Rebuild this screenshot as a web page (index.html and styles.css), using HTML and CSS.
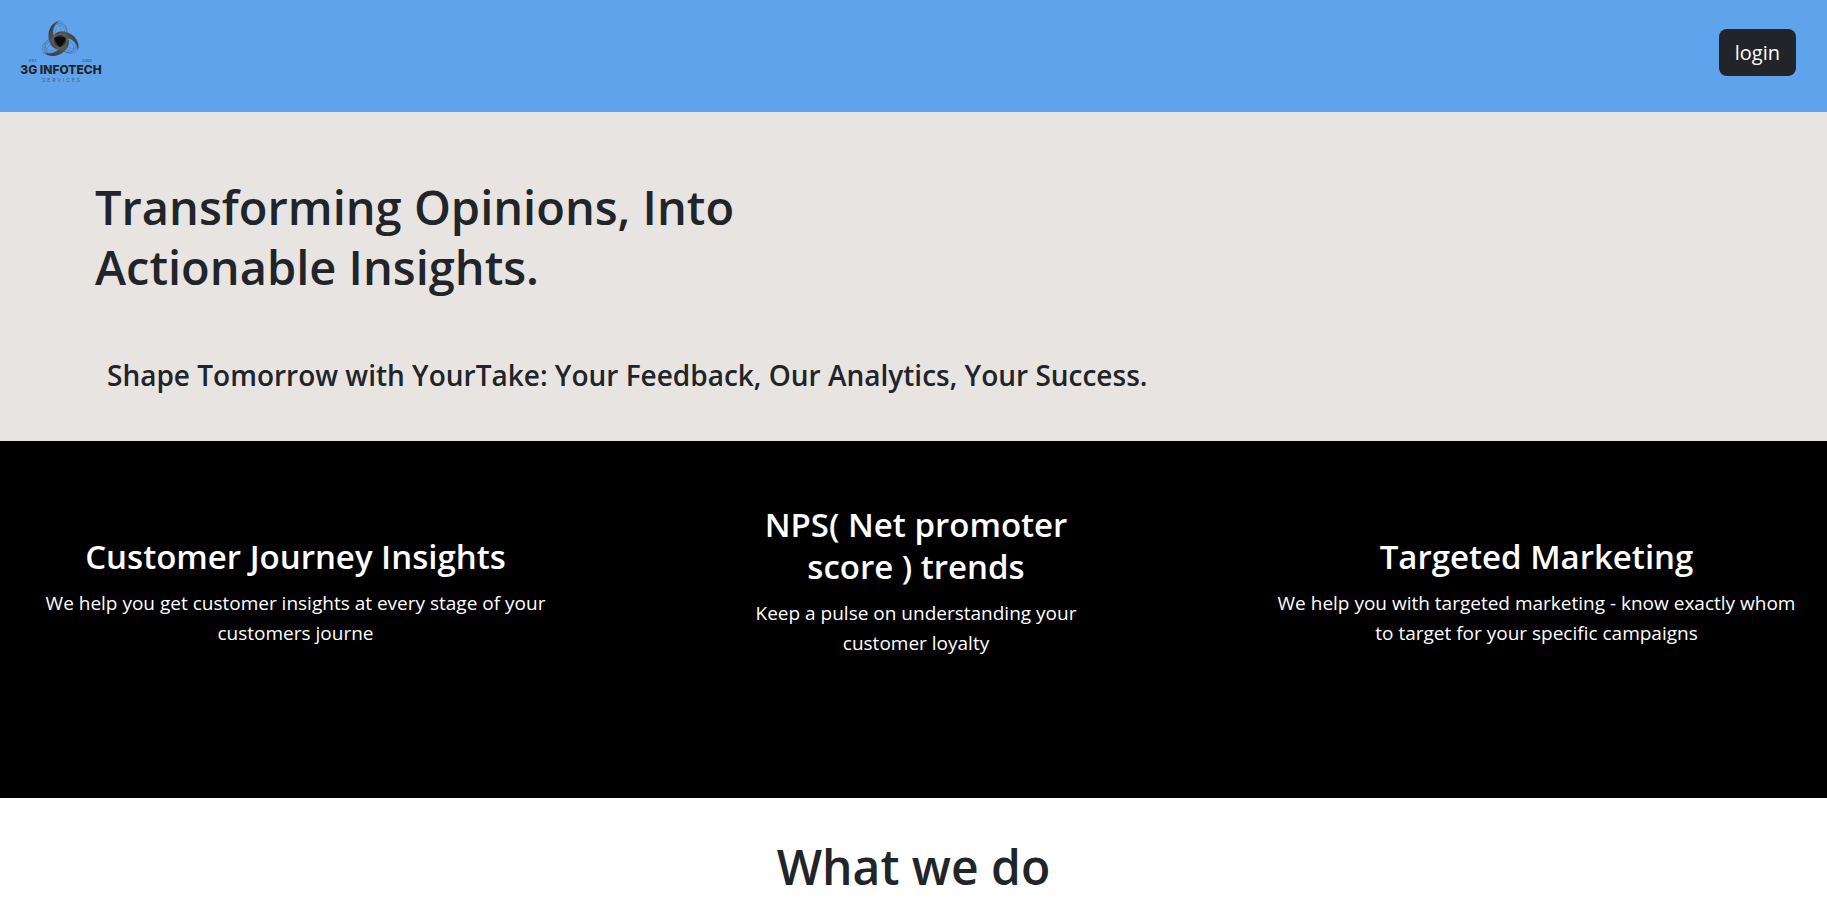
FILE: index.html
```html
<!DOCTYPE html>
<html lang="en">
<head>
  <meta charset="utf-8">
  <meta name="viewport" content="width=device-width, initial-scale=1">
  <title>3G Infotech Services</title>
  <link rel="stylesheet" href="styles.css">
</head>
<body>
  <header class="topbar">
    <a class="brand" href="#" aria-label="3G Infotech Services">
      <svg class="brand-logo" viewBox="0 0 90 72" role="img" aria-label="3G Infotech Services logo">
        <defs>
          <linearGradient id="blade" x1="0" y1="0" x2="1" y2="1">
            <stop offset="0" stop-color="#2c2c2c"/>
            <stop offset="0.45" stop-color="#565656"/>
            <stop offset="1" stop-color="#161616"/>
          </linearGradient>
          <g id="petal">
            <g class="mesh">
              <ellipse cx="43" cy="16" rx="8" ry="11"/>
              <ellipse cx="44" cy="17" rx="7" ry="10"/>
              <ellipse cx="45" cy="18" rx="6" ry="9"/>
              <ellipse cx="42" cy="18" rx="7" ry="11"/>
              <ellipse cx="41" cy="19" rx="5" ry="11"/>
            </g>
            <path fill="url(#blade)" d="M43 5 C35 7 31 15 33 24 C34 29 37 32 41 33 L48 20 C42 22 37 22 37 16 C37 11 39 8 43 5Z"/>
          </g>
        </defs>
        <use href="#petal"/>
        <use href="#petal" transform="rotate(120 44 25)"/>
        <use href="#petal" transform="rotate(240 44 25)"/>
        <circle cx="44" cy="25" r="7" fill="#333" stroke="#5a5a5a" stroke-width="2"/>
        <path fill="#0b0b0b" d="M38 22 Q44 19 50 22 Q48 28 44 31 Q40 28 38 22Z"/>
        <text class="logo-tiny" x="13" y="46">EST.</text>
        <text class="logo-tiny" x="66" y="46">2002</text>
        <text class="logo-name" x="45" y="58" text-anchor="middle">3G INFOTECH</text>
        <text class="logo-sub" x="46" y="66" text-anchor="middle">SERVICES</text>
      </svg>
    </a>
    <button class="login" type="button">login</button>
  </header>
  <main>
    <section class="hero">
      <h1 class="hero-title">Transforming Opinions, Into Actionable Insights.</h1>
      <p class="hero-lead">Shape Tomorrow with YourTake: Your Feedback, Our Analytics, Your Success.</p>
    </section>
    <section class="features">
      <article class="feature">
        <h2 class="feature-title">Customer Journey Insights</h2>
        <p class="feature-text">We help you get customer insights at every stage of your customers journe</p>
      </article>
      <article class="feature feature-middle">
        <h2 class="feature-title">NPS( Net promoter score ) trends</h2>
        <p class="feature-text">Keep a pulse on understanding your customer loyalty</p>
      </article>
      <article class="feature">
        <h2 class="feature-title">Targeted Marketing</h2>
        <p class="feature-text">We help you with targeted marketing - know exactly whom to target for your specific campaigns</p>
      </article>
    </section>
    <section class="about">
      <h2 class="about-title">What we do</h2>
    </section>
  </main>
</body>
</html>
```
FILE: styles.css
```css
* {
  box-sizing: border-box;
}

body {
  margin: 0;
  background: #fff;
  color: #212529;
  font-family: "Open Sans", "Noto Sans", sans-serif;
  font-size: 19px;
  line-height: 30px;
}

h1, h2, p {
  margin: 0;
}

.topbar {
  display: flex;
  justify-content: space-between;
  align-items: flex-start;
  padding: 16px 31px 24px 16px;
  background: #5fa3ec;
}

.brand {
  display: block;
}

.brand-logo {
  display: block;
  width: 90px;
  height: 72px;
}

.mesh {
  fill: none;
  stroke: #2b4a6c;
  stroke-width: 0.4;
  opacity: 0.6;
}

.logo-name {
  fill: #222527;
  font: 800 12px Inter, sans-serif;
}

.logo-sub {
  fill: #3f5f82;
  font: 400 5px Inter, sans-serif;
  letter-spacing: 2px;
}

.logo-tiny {
  fill: #2f4a68;
  font: 400 4px Inter, sans-serif;
}

.login {
  margin-top: 13px;
  padding: 8px 16px;
  border: 0;
  border-radius: 8px;
  background: #212529;
  color: #fff;
  font: inherit;
  font-size: 20px;
  line-height: 31px;
}

.hero {
  padding: 65px 96px 48px 95px;
  background: #e8e4e1;
}

.hero-title {
  max-width: 700px;
  font-size: 47px;
  font-weight: 600;
  line-height: 60px;
}

.hero-lead {
  margin-top: 60px;
  padding-left: 12px;
  font-size: 28px;
  font-weight: 600;
  line-height: 36px;
}

.features {
  display: grid;
  grid-template-columns: 1fr 330px 1fr;
  column-gap: 194px;
  padding: 63px 29px 140px 34px;
  background: #000;
  color: #fff;
  text-align: center;
}

.feature {
  padding-top: 32px;
}

.feature-middle {
  padding-top: 0;
}

.feature-title {
  font-size: 33px;
  font-weight: 600;
  line-height: 42px;
}

.feature-text {
  margin-top: 10px;
}

.about {
  padding: 39px 0;
}

.about-title {
  font-size: 48px;
  font-weight: 600;
  line-height: 60px;
  text-align: center;
}
```
